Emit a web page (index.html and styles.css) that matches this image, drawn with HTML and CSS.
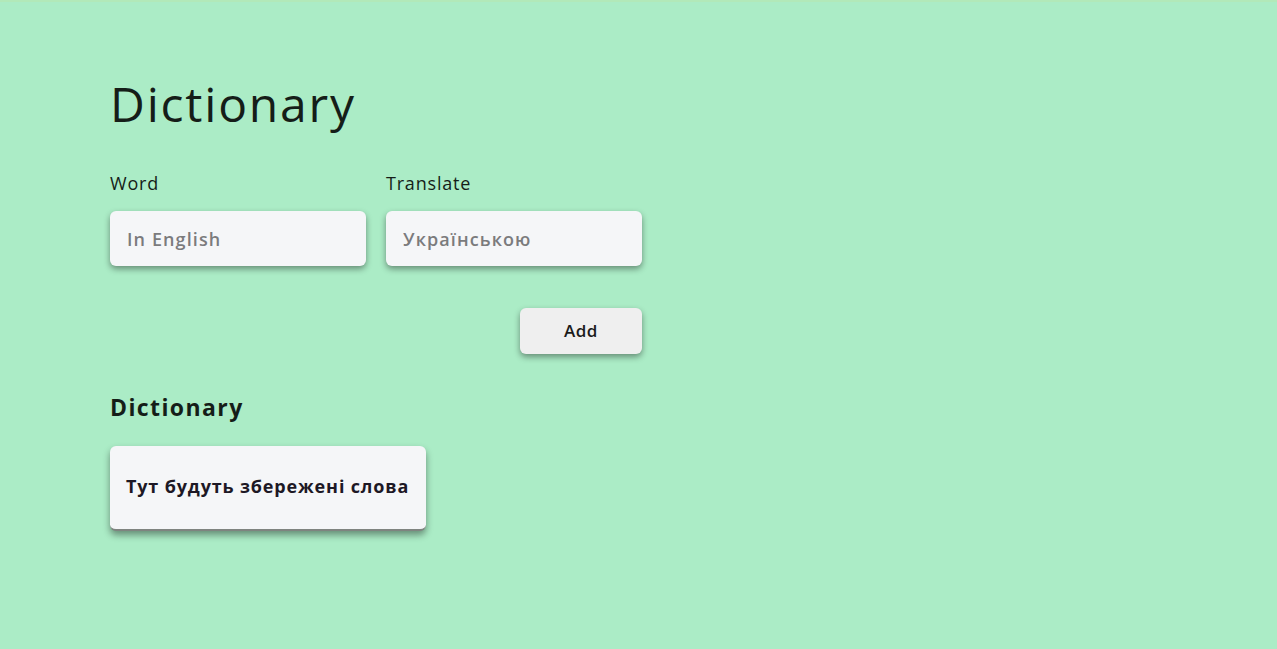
FILE: index.html
```html
<!DOCTYPE html>
<html lang="uk">
<head>
<meta charset="utf-8">
<title>Dictionary</title>
<link rel="stylesheet" href="styles.css">
</head>
<body>
<main class="app">
  <h1 class="title">Dictionary</h1>
  <form class="form">
    <div class="fields">
      <label class="field">
        <span class="label">Word</span>
        <input class="input" type="text" placeholder="In English">
      </label>
      <label class="field">
        <span class="label">Translate</span>
        <input class="input" type="text" placeholder="Українською">
      </label>
    </div>
    <div class="actions">
      <button class="btn" type="button">Add</button>
    </div>
  </form>
  <h2 class="subtitle">Dictionary</h2>
  <div class="card">
    <p class="card-text">Тут будуть збережені слова</p>
  </div>
</main>
</body>
</html>
```
FILE: styles.css
```css
html, body {
  margin: 0;
  padding: 0;
}
body {
  background: #abecc6;
  border-top: 2px solid #b2e9b9;
  font-family: "Open Sans", "Noto Sans", sans-serif;
  color: #151d18;
  min-height: 647px;
}
.app {
  padding: 70px 0 0 110px;
  width: 532px;
}
.title {
  margin: 0;
  font-size: 48px;
  font-weight: 400;
  line-height: 64px;
  letter-spacing: 1.8px;
}
.form {
  margin-top: 36px;
  display: flex;
  flex-direction: column;
}
.fields {
  display: flex;
  gap: 20px;
}
.field {
  display: flex;
  flex-direction: column;
  width: 256px;
}
.label {
  font-size: 18px;
  line-height: 22px;
  margin-bottom: 17px;
  letter-spacing: 0.8px;
}
.input {
  box-sizing: border-box;
  height: 55px;
  width: 256px;
  border: none;
  border-radius: 6px;
  background: #f5f6f8;
  box-shadow: 0 3px 6px rgba(0, 0, 0, 0.4);
  padding: 0 17px;
  font-family: inherit;
  font-size: 18px;
  font-weight: 600;
  letter-spacing: 1.1px;
  color: #333;
  outline: none;
}
.input::placeholder {
  color: #7b7b7d;
}
.actions {
  display: flex;
  justify-content: flex-end;
  margin-top: 42px;
}
.btn {
  width: 122px;
  height: 46px;
  border: none;
  border-radius: 6px;
  background: #efefef;
  box-shadow: 0 3px 6px rgba(0, 0, 0, 0.4);
  font-family: inherit;
  font-size: 17px;
  font-weight: 600;
  letter-spacing: 0.5px;
  color: #1b1b1b;
  padding-bottom: 3px;
}
.subtitle {
  margin: 38px 0 0;
  font-size: 23px;
  font-weight: 700;
  line-height: 30px;
  letter-spacing: 1.4px;
}
.card {
  margin-top: 24px;
  width: 316px;
  box-sizing: border-box;
  height: 85px;
  background: #f5f6f8;
  border-radius: 6px;
  border-bottom: 2px solid #7f8480;
  box-shadow: 0 4px 7px rgba(0, 0, 0, 0.4);
  display: flex;
  align-items: center;
  padding: 0 16px;
}
.card-text {
  margin: 0;
  font-size: 18px;
  font-weight: 700;
  letter-spacing: 0.85px;
  color: #1d1825;
  white-space: nowrap;
  padding-bottom: 4px;
}
```
